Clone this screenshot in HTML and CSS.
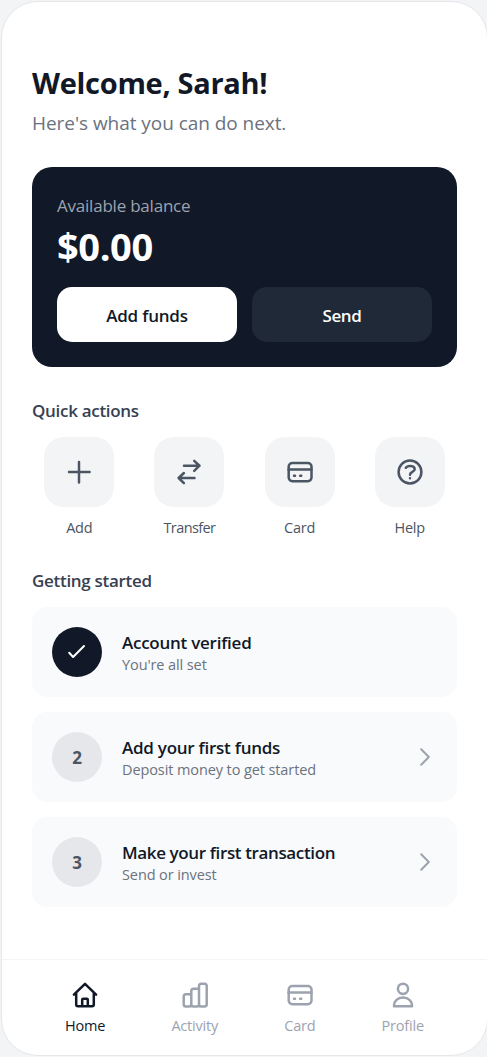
FILE: index.html
```html
<!DOCTYPE html>
<html lang="en">
<head>
<meta charset="utf-8">
<title>Home</title>
<link rel="stylesheet" href="styles.css">
</head>
<body>
<div class="phone">
  <main class="content">
    <h1 class="title">Welcome, Sarah!</h1>
    <p class="subtitle">Here's what you can do next.</p>
    <section class="balance">
      <div class="balance-label">Available balance</div>
      <div class="balance-amount">$0.00</div>
      <div class="balance-buttons">
        <button class="btn btn-light">Add funds</button>
        <button class="btn btn-dark">Send</button>
      </div>
    </section>
    <h2 class="heading">Quick actions</h2>
    <section class="actions">
      <div class="action">
        <div class="tile"><svg class="icon" viewBox="0 0 30 30"><path d="M15 5v20.6M5 15h20.6"/></svg></div>
        <span class="action-label">Add</span>
      </div>
      <div class="action">
        <div class="tile"><svg class="icon" viewBox="0 0 30 30"><path d="M10 8.7h15.5M20.2 3.9l5.3 4.8-5.3 5.2M20.5 21H5M9.9 16L4.6 21l5.3 5.1"/></svg></div>
        <span class="action-label action-label-tight">Transfer</span>
      </div>
      <div class="action">
        <div class="tile"><svg class="icon" viewBox="0 0 30 30"><rect x="3.7" y="6" width="22.8" height="18.2" rx="3.6"/><path d="M3.5 12.4h23M9 18.7h1M15.2 18.7h1"/></svg></div>
        <span class="action-label">Card</span>
      </div>
      <div class="action">
        <div class="tile"><svg class="icon" viewBox="0 0 30 30"><circle cx="15" cy="15" r="11.4"/><path d="M10.8 10.8C12.2 8.3 19.7 7.8 19.7 12.2C19.7 15 15 14.8 15 17.7M15 21.2v.1"/></svg></div>
        <span class="action-label">Help</span>
      </div>
    </section>
    <h2 class="heading heading-steps">Getting started</h2>
    <section class="steps">
      <div class="step">
        <div class="badge badge-done"><svg class="icon" viewBox="0 0 30 30"><path d="M7.2 15.8l3.9 4.2L22 9"/></svg></div>
        <div class="step-text"><div class="step-title">Account verified</div><div class="step-note">You're all set</div></div>
      </div>
      <div class="step">
        <div class="badge">2</div>
        <div class="step-text"><div class="step-title">Add your first funds</div><div class="step-note">Deposit money to get started</div></div>
        <svg class="chevron" viewBox="0 0 25 25"><path d="M9.2 4.2l7.6 7.8-7.6 7.8"/></svg>
      </div>
      <div class="step">
        <div class="badge">3</div>
        <div class="step-text"><div class="step-title step-title-tight">Make your first transaction</div><div class="step-note">Send or invest</div></div>
        <svg class="chevron" viewBox="0 0 25 25"><path d="M9.2 4.2l7.6 7.8-7.6 7.8"/></svg>
      </div>
    </section>
  </main>
  <nav class="nav">
    <div class="nav-item active">
      <svg class="icon" viewBox="0 0 30 30"><path d="M3.9 14.6L15 3.9l11.1 10.7M6.2 13v11.6q0 1.7 1.7 1.7h14.2q1.7 0 1.7-1.7V13M12.2 26v-6.2q0-1 1-1h3.6q1 0 1 1V26"/></svg>
      <span>Home</span>
    </div>
    <div class="nav-item">
      <svg class="icon" viewBox="0 0 30 30"><path d="M11.3 24.2q0 2.3-2.3 2.3H6q-2.3 0-2.3-2.3v-7.6q0-2.3 2.3-2.3h5.3M11.3 24.2V11q0-2.3 2.3-2.3H19M11.3 24.2q0 2.3 2.3 2.3h3.1q2.3 0 2.3-2.3M19 24.2V6q0-2.3 2.3-2.3h3.1q2.3 0 2.3 2.3v18.2q0 2.3-2.3 2.3h-3.1q-2.3 0-2.3-2.3"/></svg>
      <span>Activity</span>
    </div>
    <div class="nav-item">
      <svg class="icon" viewBox="0 0 30 30"><rect x="3.7" y="6" width="22.8" height="18.2" rx="3.6"/><path d="M3.5 12.4h23M9 18.7h1M15.2 18.7h1"/></svg>
      <span>Card</span>
    </div>
    <div class="nav-item">
      <svg class="icon" viewBox="0 0 30 30"><circle cx="15" cy="8.8" r="5.1"/><path d="M6 26.3V25.5c0-4.6 3.7-7.9 9-7.9s9 3.3 9 7.9v.8z"/></svg>
      <span>Profile</span>
    </div>
  </nav>
</div>
</body>
</html>
```
FILE: styles.css
```css
* { box-sizing: border-box; margin: 0; padding: 0; }
html { overflow: hidden; }
body {
  width: 489px;
  height: 1057px;
  padding: 1px;
  background: #f3f4f6;
  font-family: "Open Sans", "Noto Sans", sans-serif;
  color: #111827;
  white-space: nowrap;
}
.phone {
  display: flex;
  flex-direction: column;
  width: 487px;
  height: 1055px;
  border: 1px solid #e5e7eb;
  border-radius: 37px;
  background: #fff;
  overflow: hidden;
}
.content { flex: 1; padding: 61px 30px 0; }
.title { font-size: 29px; line-height: 40px; font-weight: 700; letter-spacing: -0.3px; }
.subtitle { margin-top: 5px; font-size: 19px; line-height: 30px; color: #6b7280; letter-spacing: -0.05px; }
.balance { margin-top: 29px; height: 200px; padding: 26px 25px 25px; border-radius: 20px; background: #111827; }
.balance-label { font-size: 17px; line-height: 25px; color: #9ca3af; letter-spacing: -0.22px; }
.balance-amount { margin-top: 6px; font-size: 38px; line-height: 45px; font-weight: 700; color: #fff; letter-spacing: -0.4px; }
.balance-buttons { display: flex; gap: 15px; margin-top: 18px; }
.btn {
  flex: 1;
  height: 55px;
  padding-top: 2px;
  border: 0;
  border-radius: 15px;
  font: 600 17px/25px "Open Sans", "Noto Sans", sans-serif;
  letter-spacing: -0.2px;
}
.btn-light { background: #fff; color: #111827; }
.btn-dark { background: #1f2937; color: #fff; letter-spacing: -0.4px; }
.heading { margin-top: 31px; font-size: 17px; line-height: 25px; font-weight: 600; color: #374151; letter-spacing: -0.3px; }
.heading-steps { margin-top: 30px; }
.actions { display: grid; grid-template-columns: repeat(4, 1fr); gap: 15.5px; margin-top: 14px; }
.action { display: flex; flex-direction: column; align-items: center; }
.tile {
  display: flex;
  align-items: center;
  justify-content: center;
  width: 70px;
  height: 70px;
  border-radius: 20px;
  background: #f3f4f6;
  color: #4b5563;
}
.action-label { margin-top: 11px; font-size: 14.5px; line-height: 20px; color: #4b5563; letter-spacing: -0.2px; }
.action-label-tight { letter-spacing: -0.6px; }
.icon {
  width: 30px;
  height: 30px;
  fill: none;
  stroke: currentColor;
  stroke-width: 2.5;
  stroke-linecap: round;
  stroke-linejoin: round;
}
.steps { display: grid; gap: 15px; margin-top: 14px; }
.step { display: flex; align-items: center; gap: 20px; height: 90px; padding: 20px; border-radius: 15px; background: #f9fafb; }
.badge {
  display: flex;
  align-items: center;
  justify-content: center;
  width: 50px;
  height: 50px;
  border-radius: 50%;
  background: #e5e7eb;
  color: #4b5563;
  font-size: 17px;
  font-weight: 700;
}
.badge-done { background: #111827; color: #fff; }
.badge-done .icon { stroke-width: 2; }
.step-text { flex: 1; padding-top: 4px; }
.step-title { font-size: 17px; line-height: 22px; font-weight: 600; letter-spacing: -0.25px; }
.step-title-tight { letter-spacing: -0.37px; }
.step-note { font-size: 14.5px; line-height: 22px; color: #6b7280; letter-spacing: -0.1px; }
.chevron { width: 25px; height: 25px; fill: none; stroke: #9ca3af; stroke-width: 2; stroke-linecap: round; stroke-linejoin: round; }
.nav { display: flex; justify-content: space-around; height: 96px; padding: 20px 30px 0; border-top: 1px solid #f3f4f6; }
.nav-item { display: flex; flex-direction: column; align-items: center; color: #9ca3af; font-size: 14.5px; line-height: 20px; letter-spacing: -0.2px; }
.nav-item span { margin-top: 6px; }
.active { color: #111827; }
```
